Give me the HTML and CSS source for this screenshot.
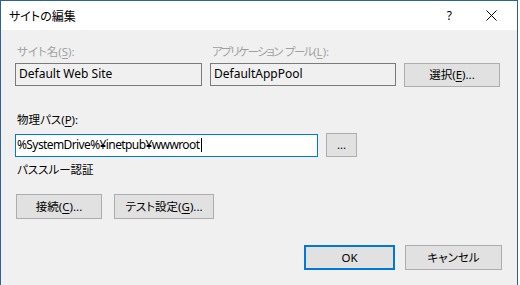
FILE: index.html
```html
<!DOCTYPE html>
<html lang="ja">
<head>
<meta charset="utf-8">
<title>サイトの編集</title>
<link rel="stylesheet" href="styles.css">
</head>
<body>
<div class="window">
  <div class="titlebar">
    <span class="title">サイトの編集</span>
    <span class="help">?</span>
    <span class="close"><svg width="11" height="11" viewBox="0 0 11 11"><path d="M0.5 0.5 L10.5 10.5 M10.5 0.5 L0.5 10.5" stroke="#000" stroke-width="1" fill="none"/></svg></span>
  </div>
  <div class="content">
    <div class="row-top">
      <div class="field site">
        <div class="label disabled">サイト名(<u>S</u>):</div>
        <div class="textbox readonly">Default Web Site</div>
      </div>
      <div class="field pool">
        <div class="label disabled"><span class="kana">アプリケーション</span> <span class="kana">プール</span>(<u>L</u>):</div>
        <div class="textbox readonly">DefaultAppPool</div>
      </div>
      <button class="btn select">選択(<u>E</u>)...</button>
    </div>

    <div class="label path-label">物理パス(<u>P</u>):</div>
    <div class="row-path">
      <div class="textbox focused">%SystemDrive%¥inetpub¥wwwroot<span class="caret"></span></div>
      <button class="btn dots">...</button>
    </div>
    <div class="label passthrough">パススルー認証</div>

    <div class="row-conn">
      <button class="btn connect">接続(<u>C</u>)...</button>
      <button class="btn test">テスト設定(<u>G</u>)...</button>
    </div>

    <div class="row-actions">
      <button class="btn ok">OK</button>
      <button class="btn cancel">キャンセル</button>
    </div>
  </div>
</div>
</body>
</html>
```
FILE: styles.css
```css
* { box-sizing: border-box; }
html, body { margin: 0; padding: 0; background: #ffffff; }
body {
  width: 520px;
  height: 285px;
  overflow: hidden;
  font-family: "Noto Sans", "Noto Sans CJK JP", sans-serif;
  font-size: 12px;
  color: #000;
  font-feature-settings: "palt";
}
u { text-decoration: underline; text-underline-offset: 2px; }

.window {
  width: 518px;
  height: 285px;
  border: 1px solid #2e6290;
  border-bottom: none;
  display: flex;
  flex-direction: column;
}
.titlebar {
  height: 29px;
  background: #fff;
  display: flex;
  align-items: center;
  padding-left: 8px;
  flex: none;
}
.title {
  font-family: "Noto Sans CJK JP", sans-serif;
  font-size: 12px;
  flex: 1;
}
.help {
  font-family: "Noto Sans", sans-serif;
  font-size: 12px;
  margin-right: 34px;
}
.close {
  display: flex;
  margin-right: 20px;
}
.content {
  flex: 1;
  background: #f0f0f0;
  padding: 14px 0 0 14px;
}

.label {
  font-family: "Noto Sans", "Noto Sans CJK JP", sans-serif;
  font-size: 11.5px;
  line-height: 16px;
  height: 16px;
  padding-left: 2px;
  white-space: nowrap;
}
.label.disabled { color: #a0a0a0; }
.kana { letter-spacing: -1.5px; }

.row-top {
  display: flex;
  align-items: flex-end;
}
.field { display: flex; flex-direction: column; gap: 3px; }
.site { width: 187px; }
.pool { width: 186px; margin-left: 8px; }

.textbox {
  height: 23px;
  border: 1px solid #7a7a7a;
  padding-left: 3px;
  line-height: 20px;
  font-size: 12px;
  white-space: nowrap;
}
.textbox.readonly { background: #f0f0f0; }
.textbox.focused {
  background: #fff;
  border-color: #0078d7;
  width: 303px;
  padding-left: 1px;
  display: flex;
  align-items: center;
  letter-spacing: -0.6px;
}
.caret {
  display: inline-block;
  width: 1px;
  height: 14px;
  background: #000;
  margin-left: 2px;
}

.btn {
  font-family: "Noto Sans", "Noto Sans CJK JP", sans-serif;
  font-size: 11.5px;
  color: #000;
  background: #e1e1e1;
  border: 1px solid #adadad;
  padding: 0;
  margin: 0;
  height: 24px;
  line-height: 20px;
  font-feature-settings: "palt";
}
.select { width: 96px; margin-left: 8px; margin-bottom: -1px; }

.path-label { margin-top: 26px; }
.row-path {
  display: flex;
  align-items: center;
  margin-top: 5px;
}
.dots { width: 31px; margin-left: 8px; line-height: 16px; }
.passthrough { margin-top: 5px; }

.row-conn {
  display: flex;
  gap: 12px;
  margin-top: 16px;
  padding-left: 1px;
}
.connect { width: 86px; height: 25px; }
.test { width: 100px; height: 25px; }

.row-actions {
  display: flex;
  gap: 10px;
  margin-top: 26px;
  padding-left: 289px;
}
.ok { width: 91px; height: 25px; border: 2px solid #0078d7; }
.cancel { width: 97px; height: 25px; }
```
